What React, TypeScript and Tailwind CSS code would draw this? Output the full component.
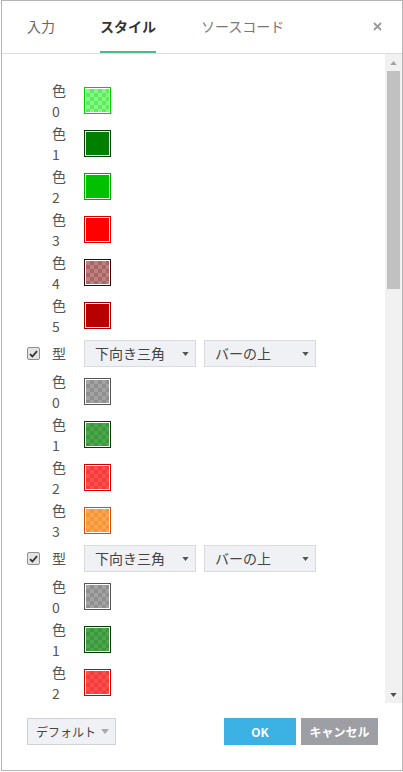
import React from "react";

/* ─── Datos ─── */
type Swatch = { border: string; fill: string; checker: boolean };

const group1: Swatch[] = [
  { border: "border-[#00d000]", fill: "bg-[#00ff00]/50", checker: true },
  { border: "border-[#004000]", fill: "bg-[#007f00]", checker: false },
  { border: "border-[#00a800]", fill: "bg-[#00c000]", checker: false },
  { border: "border-[#d00000]", fill: "bg-[#ff0000]", checker: false },
  { border: "border-[#400000]", fill: "bg-[#800000]/50", checker: true },
  { border: "border-[#a00000]", fill: "bg-[#b80000]", checker: false },
];

const group2: Swatch[] = [
  { border: "border-[#555555]", fill: "bg-[#666666]/60", checker: true },
  { border: "border-[#004000]", fill: "bg-[#008000]/70", checker: true },
  { border: "border-[#d00000]", fill: "bg-[#ff0000]/70", checker: true },
  { border: "border-[#d05000]", fill: "bg-[#ff8000]/70", checker: true },
];

const group3 = group2.slice(0, 3);

const Caret = ({ className = "" }: { className?: string }) => (
  <svg width="8" height="5" viewBox="0 0 8 5" className={className}>
    <polygon points="0,0 8,0 4,5" fill="currentColor" />
  </svg>
);

function ColorRow({ index, s }: { index: number; s: Swatch }) {
  return (
    <div className="flex items-center h-[43px] pl-[50px]">
      <div className="w-8 leading-[21px] text-[14px] text-[#555]">
        <div>色</div>
        <div>{index}</div>
      </div>
      <div className={`w-[27px] h-[27px] border ${s.border} bg-white p-px`}>
        <div
          className={`w-full h-full ${
            s.checker
              ? "bg-[repeating-conic-gradient(#cccccc_0_25%,#ffffff_0_50%)] bg-[length:8px_8px]"
              : ""
          }`}
        >
          <div className={`w-full h-full ${s.fill}`} />
        </div>
      </div>
    </div>
  );
}

function Select({ label }: { label: string }) {
  return (
    <div className="w-[112px] h-[27px] bg-[#f0f1f5] border border-[#d9dbe0] flex items-center justify-between pl-[10px] pr-[6px] text-[14px] text-[#444]">
      <span>{label}</span>
      <Caret className="text-[#555] w-[7px] h-[4px]" />
    </div>
  );
}

function TypeRow() {
  return (
    <div className="flex items-center h-[33px] pl-[25px]">
      <div className="w-[13px] h-[13px] rounded-[2px] border border-[#8f8f8f] bg-[#e4e4e4] flex items-center justify-center mr-[12px]">
        <svg width="9" height="8" viewBox="0 0 9 8">
          <path d="M1 4.2 L3.4 6.5 L8 1.2" fill="none" stroke="#333" strokeWidth="1.8" />
        </svg>
      </div>
      <div className="w-8 text-[14px] text-[#555]">型</div>
      <div className="flex gap-2">
        <Select label="下向き三角" />
        <Select label="バーの上" />
      </div>
    </div>
  );
}

function ScrollBar() {
  return (
    <div className="w-[17px] bg-[#f1f1f1] flex flex-col">
      <div className="h-[17px] flex items-center justify-center">
        <Caret className="text-[#a3a3a3] w-[7px] h-[4px] rotate-180" />
      </div>
      <div className="h-[218px] mx-[2px] bg-[#c1c1c1]" />
      <div className="flex-1" />
      <div className="h-[17px] flex items-center justify-center">
        <Caret className="text-[#505050] w-[7px] h-[4px]" />
      </div>
    </div>
  );
}

export default function App() {
  return (
    <div className="w-[403px] h-[772px] bg-white pl-px font-['Noto_Sans_CJK_JP','Noto_Sans',sans-serif]">
      <div className="w-[402px] h-[771px] border border-[#b5b5b5] flex flex-col">
        {/* ─── Tabs ─── */}
        <div className="h-[53px] border-b border-[#dddddd] flex items-stretch pl-[25px] pr-[20px] gap-[45px] shrink-0">
          <div className="flex items-center text-[14px] text-[#666] border-b-2 border-transparent">入力</div>
          <div className="flex items-center text-[14px] font-bold text-[#333] border-b-2 border-[#4fb88b]">スタイル</div>
          <div className="flex items-center text-[14px] text-[#777] border-b-2 border-transparent">ソースコード</div>
          <div className="ml-auto flex items-center pb-[2px]">
            <svg width="9" height="9" viewBox="0 0 9 9">
              <path d="M1 1 L8 8 M8 1 L1 8" stroke="#9a9a9a" strokeWidth="1.8" />
            </svg>
          </div>
        </div>

        {/* ─── Contenido ─── */}
        <div className="h-[649px] flex shrink-0">
          <div className="flex-1 overflow-hidden pt-[25px]">
            {group1.map((s, i) => (
              <ColorRow key={`a${i}`} index={i} s={s} />
            ))}
            <TypeRow />
            {group2.map((s, i) => (
              <ColorRow key={`b${i}`} index={i} s={s} />
            ))}
            <TypeRow />
            {group3.map((s, i) => (
              <ColorRow key={`c${i}`} index={i} s={s} />
            ))}
          </div>
          <ScrollBar />
        </div>

        {/* ─── Pie ─── */}
        <div className="flex-1 flex items-start justify-between pt-[15px] pl-[25px] pr-[24px]">
          <div className="w-[89px] h-[27px] bg-[#f0f1f5] border border-[#d0d2d6] flex items-center justify-between pl-[8px] pr-[6px] text-[12px] text-[#444] whitespace-nowrap">
            <span>デフォルト</span>
            <Caret className="text-[#aaaaaa]" />
          </div>
          <div className="flex gap-[5px]">
            <button className="w-[72px] h-[27px] bg-[#3cb1e3] text-white text-[12px] font-bold">OK</button>
            <button className="w-[77px] h-[27px] bg-[#9d9fa4] text-white text-[12px] font-bold">キャンセル</button>
          </div>
        </div>
      </div>
    </div>
  );
}
